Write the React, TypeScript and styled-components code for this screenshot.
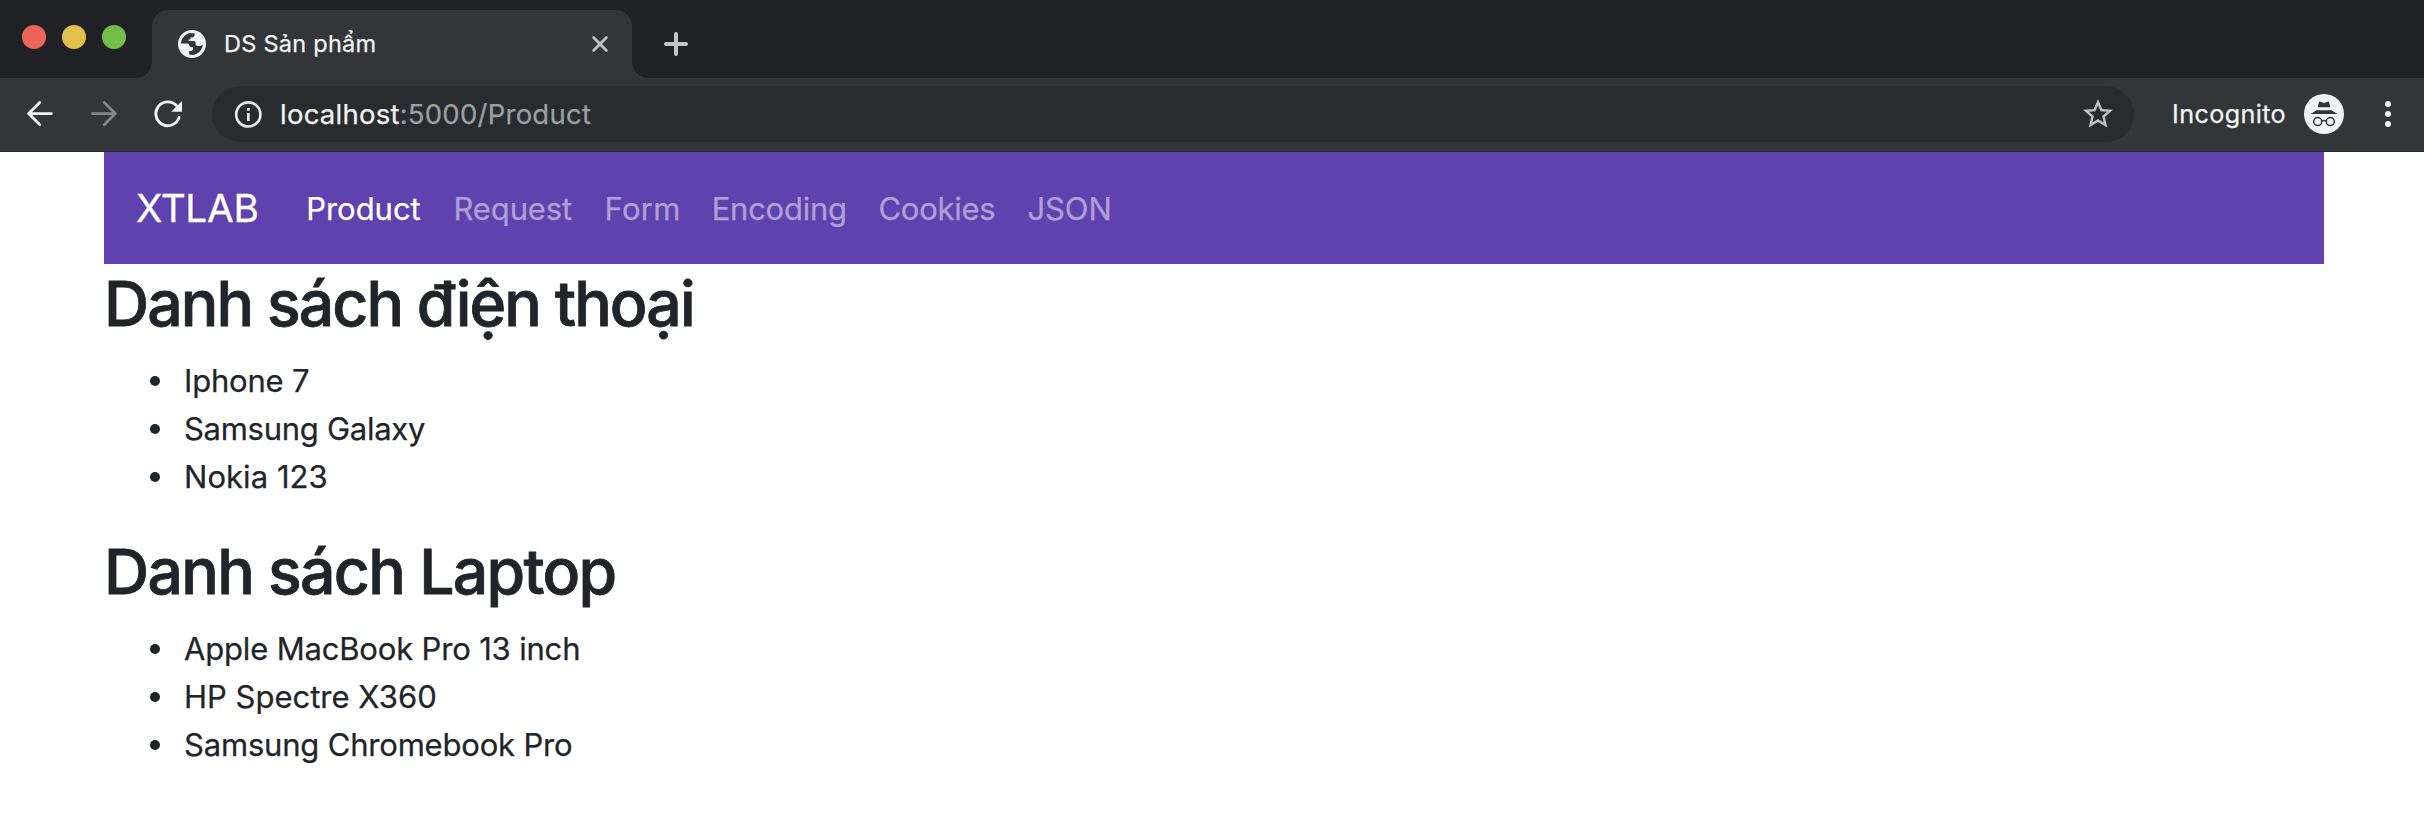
import React from "react";
import styled, { createGlobalStyle } from "styled-components";
import { MdStarBorder } from "react-icons/md";

const GlobalStyle = createGlobalStyle`
  *, *::before, *::after { box-sizing: border-box; }
  html, body { margin: 0; background: #fff; }
  body {
    font-family: Inter, "Liberation Sans", sans-serif;
    color: #212529;
    overflow: hidden;
  }
`;

const Window = styled.div`
  display: flex;
  flex-direction: column;
  width: 2424px;
  height: 818px;
  background: #fff;
`;

/* ---------- tab strip ---------- */

const TabStrip = styled.div`
  display: flex;
  height: 78px;
  padding: 10px 0 0 22px;
  background: #202124;
`;

const WindowControls = styled.div`
  display: flex;
  gap: 16px;
  height: 24px;
  margin: 15px 26px 0 0;
`;

const ControlDot = styled.span<{ $color: string }>`
  width: 24px;
  height: 24px;
  border-radius: 50%;
  background: ${(p) => p.$color};
`;

const Tab = styled.div`
  position: relative;
  display: flex;
  align-items: center;
  width: 480px;
  padding: 0 24px 0 26px;
  border-radius: 16px 16px 0 0;
  background: #323639;

  &::before,
  &::after {
    content: "";
    position: absolute;
    bottom: 0;
    width: 16px;
    height: 16px;
  }
  &::before {
    left: -16px;
    background: radial-gradient(circle at 0 0, transparent 15.6px, #323639 16.2px);
  }
  &::after {
    right: -16px;
    background: radial-gradient(circle at 100% 0, transparent 15.6px, #323639 16.2px);
  }
`;

const TabTitle = styled.span`
  flex: 1;
  margin-left: 18px;
  font-size: 23.5px;
  letter-spacing: 0.26px;
  line-height: 32px;
  color: #f1f3f4;
  -webkit-text-stroke: 0.25px currentColor;
  white-space: nowrap;
`;

const NewTab = styled.div`
  display: flex;
  align-items: center;
  margin-left: 32px;
`;

/* ---------- toolbar ---------- */

const Toolbar = styled.div`
  display: flex;
  align-items: center;
  height: 74px;
  padding: 0 30px 1px 26px;
  background: #323639;
  border-bottom: 1px solid #26292b;
`;

const NavButtons = styled.div`
  display: flex;
  gap: 36px;
  width: 186px;
`;

const Omnibox = styled.div`
  display: flex;
  align-items: center;
  width: 1922px;
  height: 56px;
  padding: 0 18px 0 22px;
  border-radius: 28px;
  background: #282c2f;
`;

const Url = styled.span`
  flex: 1;
  margin-left: 18px;
  font-size: 27.5px;
  letter-spacing: 0.24px;
  line-height: 36px;
  color: #9aa0a3;
  -webkit-text-stroke: 0.25px currentColor;
`;

const Host = styled.span`
  color: #f1f3f4;
`;

const ProfileLabel = styled.span`
  width: 113px;
  margin: 0 19px 0 38px;
  font-size: 25.2px;
  letter-spacing: 0.38px;
  line-height: 34px;
  color: #f1f3f4;
  -webkit-text-stroke: 0.25px currentColor;
  white-space: nowrap;
`;

const MenuDots = styled.div`
  display: flex;
  flex-direction: column;
  gap: 3.8px;
  margin-left: 40.8px;
`;

const MenuDot = styled.i`
  width: 6.4px;
  height: 6.4px;
  border-radius: 50%;
  background: #f1f3f4;
`;

/* ---------- page ---------- */

const Container = styled.main`
  width: 2220px;
  margin-left: 104px;
`;

const Navbar = styled.nav`
  display: flex;
  align-items: center;
  height: 112px;
  padding: 0 32px;
  background: #6042ae;
`;

const Brand = styled.a`
  width: 154.2px;
  font-size: 38.8px;
  letter-spacing: -0.3px;
  line-height: 60px;
  color: #fff;
  -webkit-text-stroke: 0.3px currentColor;
`;

const NavLink = styled.a<{ $width: number; $tracking: number; $active?: boolean }>`
  width: ${(p) => p.$width}px;
  margin-top: 1px;
  padding: 16px;
  font-size: 31px;
  line-height: 48px;
  letter-spacing: ${(p) => p.$tracking}px;
  white-space: nowrap;
  color: ${(p) => (p.$active ? "#fff" : "#b0a0d6")};
  -webkit-text-stroke: 0.25px currentColor;
`;

const Heading = styled.h2<{ $tracking: number }>`
  margin: 0 0 14.6px;
  font-size: 62.5px;
  font-weight: 500;
  line-height: 78px;
  letter-spacing: ${(p) => p.$tracking}px;
  -webkit-text-stroke: 0.8px currentColor;
  white-space: nowrap;
`;

const List = styled.ul`
  margin: 0 0 31.4px;
  padding: 0 0 0 46px;
  list-style: none;
`;

const Item = styled.li<{ $tracking: number }>`
  display: flex;
  align-items: center;
  font-size: 31px;
  line-height: 48px;
  letter-spacing: ${(p) => p.$tracking}px;
  -webkit-text-stroke: 0.25px currentColor;

  &::before {
    content: "";
    width: 10px;
    height: 10px;
    margin-right: 24px;
    border-radius: 50%;
    background: currentColor;
  }
`;

/* ---------- icons ---------- */

const GlobeIcon = () => (
  <svg width="28" height="28" viewBox="0 0 28 28">
    <circle cx="14" cy="14" r="14" fill="#f1f3f4" />
    <path
      fill="#323639"
      d="M3 13.4C3.4 8 7.2 3.9 12.4 3L16.8 3.4C16.6 6 15.8 7.2 14 7.4H12.4V9.6H10.6V11H16.2L17.6 12.4V15L19.4 16H22.4L24.8 14.4C24.4 19.8 20.2 24.2 15 24.9L11.2 24.6V21H13.2L15 19.8V17.2H13L10.8 15V14L9.6 13.4Z"
    />
  </svg>
);

const CloseIcon = () => (
  <svg width="16" height="16" viewBox="0 0 16 16" stroke="#bdc1c2" strokeWidth="2.8" strokeLinecap="round">
    <path d="M1.6 1.6L14.4 14.4M14.4 1.6L1.6 14.4" />
  </svg>
);

const PlusIcon = () => (
  <svg width="24" height="24" viewBox="0 0 24 24" stroke="#c2c4c7" strokeWidth="4" strokeLinecap="round">
    <path d="M12 2V22M2 12H22" />
  </svg>
);

const BackIcon = () => (
  <svg width="28" height="28" viewBox="0 0 28 28" fill="none" stroke="#f1f3f4" strokeWidth="2.8" strokeLinecap="round" strokeLinejoin="round">
    <path d="M25.4 13.6H2.6M13.8 2.4L2.6 13.6L13.8 24.8" />
  </svg>
);

const ForwardIcon = () => (
  <svg width="28" height="28" viewBox="0 0 28 28" fill="none" stroke="#848688" strokeWidth="2.8" strokeLinecap="round" strokeLinejoin="round">
    <path d="M2.4 13.6H25.4M14.2 2.4L25.4 13.6L14.2 24.8" />
  </svg>
);

const ReloadIcon = () => (
  <svg width="28" height="28" viewBox="0 0 28 28" fill="none">
    <path d="M25.1 17.4A11.9 11.9 0 1 1 22.4 5.6" stroke="#f1f3f4" strokeWidth="2.9" strokeLinecap="round" />
    <path d="M28 1V11.8H17.2Z" fill="#f1f3f4" />
  </svg>
);

const InfoIcon = () => (
  <svg width="28" height="28" viewBox="0 0 28 28" fill="none">
    <circle cx="14.3" cy="14.4" r="12.1" stroke="#e8eaed" strokeWidth="2.7" />
    <path d="M13 8H15.7V10.8H13ZM13 13H15.7V21H13Z" fill="#e8eaed" />
  </svg>
);

const IncognitoIcon = () => (
  <svg width="40" height="40" viewBox="0 0 40 40">
    <circle cx="20" cy="20" r="20" fill="#f1f3f4" />
    <g fill="#323639">
      <path d="M15.6 7.6L20 8.9L24.4 7.6Q25 7.6 25.2 8.4L26.3 13.3H13.7L14.8 8.4Q15 7.6 15.6 7.6Z" />
      <path d="M12.6 16.2H27.4L33.4 19.9H6.6Z" />
    </g>
    <g fill="none" stroke="#323639" strokeWidth="1.5">
      <circle cx="13.7" cy="27.6" r="4" />
      <circle cx="26.3" cy="27.6" r="4" />
      <path d="M17.6 27.2Q20 25.8 22.4 27.2" />
    </g>
  </svg>
);

const links = [
  { label: "Product", width: 147.2, tracking: -0.03, active: true },
  { label: "Request", width: 151.2, tracking: -0.1 },
  { label: "Form", width: 107.1, tracking: 0.3 },
  { label: "Encoding", width: 166.8, tracking: -0.24 },
  { label: "Cookies", width: 149, tracking: -0.26 },
  { label: "JSON", width: 116, tracking: -0.12 },
];

const groups = [
  {
    title: "Danh sách điện thoại",
    tracking: -1.91,
    items: [
      { name: "Iphone 7", tracking: -0.2 },
      { name: "Samsung Galaxy", tracking: -0.28 },
      { name: "Nokia 123", tracking: 0.05 },
    ],
  },
  {
    title: "Danh sách Laptop",
    tracking: -1.68,
    items: [
      { name: "Apple MacBook Pro 13 inch", tracking: -0.17 },
      { name: "HP Spectre X360", tracking: 0 },
      { name: "Samsung Chromebook Pro", tracking: -0.19 },
    ],
  },
];

export default function App() {
  return (
    <Window>
      <GlobalStyle />
      <TabStrip>
        <WindowControls>
          <ControlDot $color="#ed655a" />
          <ControlDot $color="#e1c04c" />
          <ControlDot $color="#72be47" />
        </WindowControls>
        <Tab>
          <GlobeIcon />
          <TabTitle>DS Sản phẩm</TabTitle>
          <CloseIcon />
        </Tab>
        <NewTab>
          <PlusIcon />
        </NewTab>
      </TabStrip>
      <Toolbar>
        <NavButtons>
          <BackIcon />
          <ForwardIcon />
          <ReloadIcon />
        </NavButtons>
        <Omnibox>
          <InfoIcon />
          <Url>
            <Host>localhost</Host>:5000/Product
          </Url>
          <MdStarBorder size={36} color="#bdc1c4" />
        </Omnibox>
        <ProfileLabel>Incognito</ProfileLabel>
        <IncognitoIcon />
        <MenuDots>
          <MenuDot />
          <MenuDot />
          <MenuDot />
        </MenuDots>
      </Toolbar>
      <Container>
        <Navbar>
          <Brand>XTLAB</Brand>
          {links.map((l) => (
            <NavLink key={l.label} $width={l.width} $tracking={l.tracking} $active={l.active}>
              {l.label}
            </NavLink>
          ))}
        </Navbar>
        {groups.map((g) => (
          <section key={g.title}>
            <Heading $tracking={g.tracking}>{g.title}</Heading>
            <List>
              {g.items.map((i) => (
                <Item key={i.name} $tracking={i.tracking}>
                  {i.name}
                </Item>
              ))}
            </List>
          </section>
        ))}
      </Container>
    </Window>
  );
}
